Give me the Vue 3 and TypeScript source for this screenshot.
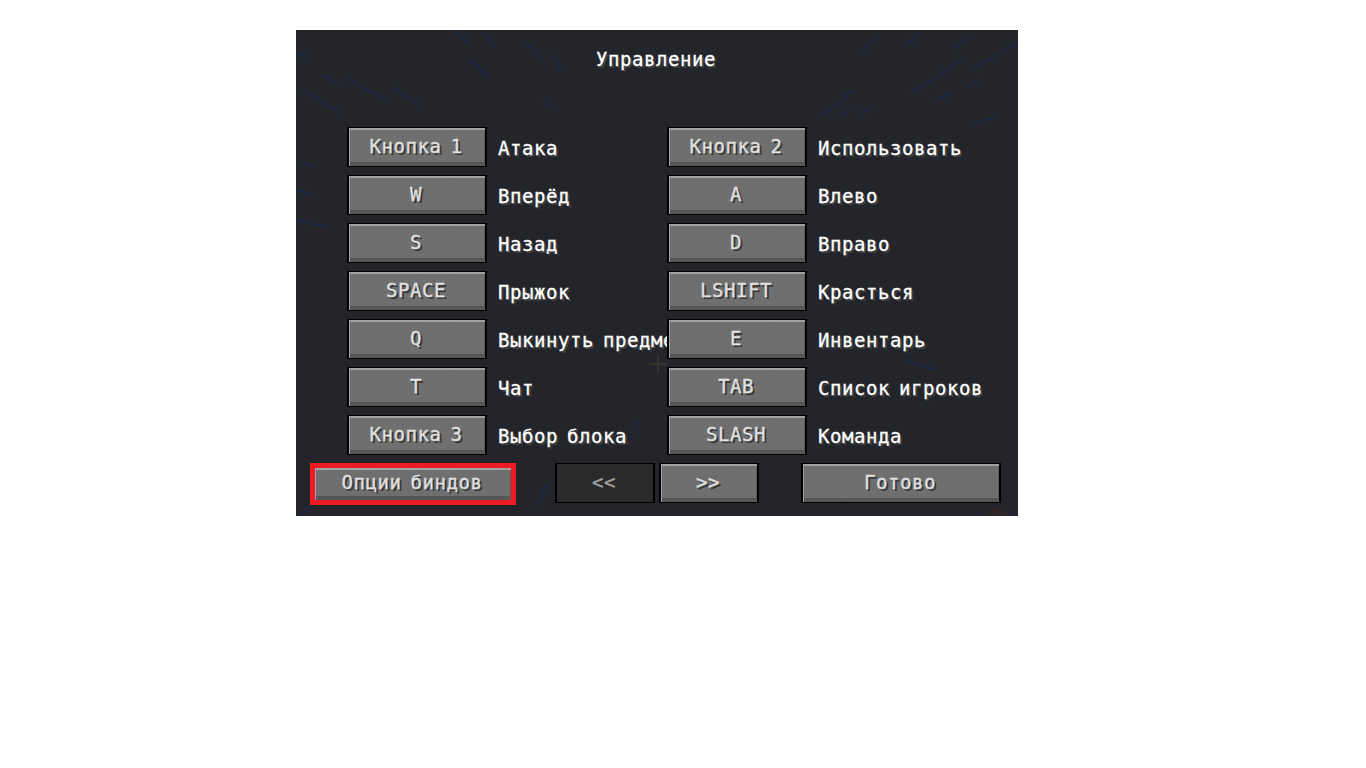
<script setup lang="ts">
type Bind = { key: string; label: string }

const binds: Bind[][] = [
  [
    { key: 'Кнопка 1', label: 'Атака' },
    { key: 'Кнопка 2', label: 'Использовать' },
  ],
  [
    { key: 'W', label: 'Вперёд' },
    { key: 'A', label: 'Влево' },
  ],
  [
    { key: 'S', label: 'Назад' },
    { key: 'D', label: 'Вправо' },
  ],
  [
    { key: 'SPACE', label: 'Прыжок' },
    { key: 'LSHIFT', label: 'Красться' },
  ],
  [
    { key: 'Q', label: 'Выкинуть предмет' },
    { key: 'E', label: 'Инвентарь' },
  ],
  [
    { key: 'T', label: 'Чат' },
    { key: 'TAB', label: 'Список игроков' },
  ],
  [
    { key: 'Кнопка 3', label: 'Выбор блока' },
    { key: 'SLASH', label: 'Команда' },
  ],
]

// faint background streaks, in window coordinates
const streaks = [
  'M50 47L90 70', 'M97 58L122 75', 'M7 60L43 83', 'M173 28L192 47', 'M230 12L243 28',
  'M255 23L265 42', 'M188 2L200 17', 'M158 0L172 13', 'M248 67L257 80', 'M0 22L10 27',
  'M28 45L43 55', 'M7 133L20 137', 'M0 160L17 165', 'M0 190L33 197',
  'M616 63L666 30', 'M677 38L721 13', 'M527 85L557 60', 'M567 20L582 8', 'M611 15L624 3',
  'M657 18L674 7', 'M566 83L579 75', 'M637 72L654 63', 'M677 95L699 87', 'M541 88L556 78',
  'M671 57L681 50', 'M340 390L333 413', 'M250 455L240 476', 'M20 470L5 486', 'M610 330L640 340',
]
</script>

<template>
  <div class="window">
    <svg class="streaks" width="722" height="486" viewBox="0 0 722 486" aria-hidden="true">
      <defs>
        <filter id="soft"><feGaussianBlur stdDeviation="0.7" /></filter>
      </defs>
      <g filter="url(#soft)">
        <path v-for="d in streaks" :key="d" :d="d" />
      </g>
      <path class="crosshair" d="M362 325V343M353 334H371" />
      <path class="rock" d="M689 486L701 478L717 486Z" />
    </svg>

    <h1 class="title">Управление</h1>

    <div class="grid">
      <div v-for="(row, i) in binds" :key="i" class="row">
        <div v-for="bind in row" :key="bind.key" class="cell">
          <button class="mc-btn key">{{ bind.key }}</button>
          <span class="label">{{ bind.label }}</span>
        </div>
      </div>
    </div>

    <div class="footer">
      <div class="highlight">
        <button class="mc-btn options">Опции биндов</button>
      </div>
      <div class="pager">
        <button class="mc-btn prev">&lt;&lt;</button>
        <button class="mc-btn next">&gt;&gt;</button>
      </div>
      <button class="mc-btn done">Готово</button>
    </div>
  </div>
</template>

<style scoped>
.window {
  position: relative;
  box-sizing: border-box;
  width: 722px;
  height: 486px;
  margin: 30px 0 0 296px;
  padding-top: 18px;
  background: #24252b;
  font-family: "DejaVu Sans Mono", monospace;
  font-size: 19px;
  letter-spacing: 0.56px;
  word-spacing: -3px;
  -webkit-text-stroke: 0.3px currentColor;
  overflow: hidden;
}

.streaks {
  position: absolute;
  inset: 0;
  stroke: #1f2840;
  stroke-width: 2;
  fill: none;
}

.crosshair {
  stroke: #35352f;
}

.rock {
  fill: #2f2527;
  stroke: none;
}

.title {
  position: relative;
  margin: 0;
  height: 22px;
  padding-right: 2px;
  font-size: inherit;
  line-height: 22px;
  font-weight: 400;
  text-align: center;
  color: #fff;
  text-shadow: 2px 2px 0 #3f3f3f;
}

.grid {
  position: relative;
  margin: 57px 0 0 51px;
}

.row {
  display: grid;
  grid-template-columns: 320px 1fr;
  height: 48px;
}

.cell {
  display: flex;
  align-items: flex-start;
  min-width: 0;
}

.mc-btn {
  box-sizing: border-box;
  height: 40px;
  padding: 0 2px 3px 0;
  border: solid #000;
  border-width: 1px 2px;
  background-color: #757575;
  background-image: url("data:image/svg+xml,%3Csvg xmlns='http://www.w3.org/2000/svg' width='200' height='40'%3E%3Cfilter id='n'%3E%3CfeTurbulence type='fractalNoise' baseFrequency='.7' numOctaves='2'/%3E%3CfeColorMatrix values='0 0 0 0 0 0 0 0 0 0 0 0 0 0 0 .5 0 0 0 0'/%3E%3C/filter%3E%3Crect width='200' height='40' filter='url(%23n)' opacity='.2'/%3E%3C/svg%3E");
  box-shadow: inset 0 2px 0 #a2a2a2, inset 1px 0 0 #a2a2a2, inset -1px 0 0 #5a5a5a, inset 0 -4px 0 #565656;
  font-family: inherit;
  font-size: inherit;
  letter-spacing: inherit;
  word-spacing: inherit;
  color: #e0e0e0;
  text-shadow: 2px 2px 0 #383838;
  white-space: nowrap;
}

.key {
  position: relative;
  flex: none;
  width: 140px;
  z-index: 1;
}

.label {
  margin: 9px 0 0 11px;
  line-height: 24px;
  color: #fff;
  text-shadow: 2px 2px 0 #3f3f3f;
  white-space: nowrap;
}

.footer {
  position: relative;
  display: flex;
  align-items: flex-start;
  margin: 0 0 0 14px;
}

.highlight {
  padding: 5px;
  background: #ed1c24;
}

.options {
  display: block;
  width: 196px;
  height: 32px;
  border: 0;
  padding-bottom: 4px;
}

.pager {
  display: flex;
  gap: 4px;
  margin-left: 39px;
}

.prev {
  width: 100px;
  background: #2a2a2a;
  box-shadow: none;
  color: #a0a0a0;
  text-shadow: none;
}

.next {
  width: 100px;
}

.done {
  width: 200px;
  margin-left: 42px;
}
</style>

<style>
html,
body {
  background: #fff;
}
</style>
